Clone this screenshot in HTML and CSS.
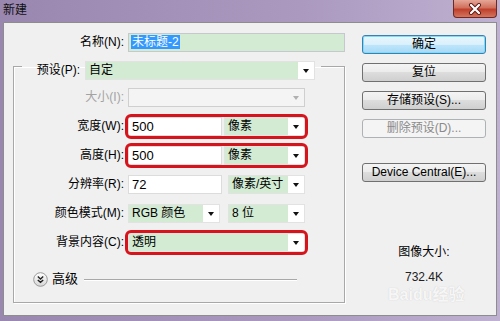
FILE: index.html
```html
<!DOCTYPE html>
<html lang="zh-CN">
<head>
    <meta charset="UTF-8">
    <title>新建</title>
    <link rel="stylesheet" href="styles.css">
</head>
<body>

    <div class="window">
        <div class="titlebar">
            <span class="title">新建</span>
            <span class="close">
                <svg width="14" height="12" viewBox="0 0 14 12">
                    <path d="M3 2 L11 10 M11 2 L3 10" stroke="#5a1a14" stroke-width="4" stroke-linecap="round"/>
                    <path d="M3 2 L11 10 M11 2 L3 10" stroke="#fff" stroke-width="2.2" stroke-linecap="round"/>
                </svg>
            </span>
        </div>

        <div class="client">
            <div class="left">
                <div class="name-row">
                    <span class="lbl">名称(N):</span>
                    <div class="name-field"><span class="selected">未标题-2</span></div>
                </div>

                <fieldset class="group">
                    <legend class="preset">
                        <span class="lbl preset-lbl">预设(P):</span>
                        <div class="combo preset-combo"><span class="val">自定</span><span class="arrow"></span></div>
                    </legend>

                    <div class="rows">
                        <div class="row">
                            <span class="lbl disabled">大小(I):</span>
                            <div class="combo off w-full"><span class="val"></span><span class="arrow"></span></div>
                        </div>
                        <div class="row">
                            <span class="lbl">宽度(W):</span>
                            <div class="pair marked">
                                <div class="input">500</div>
                                <div class="combo unit-near"><span class="val">像素</span><span class="arrow"></span></div>
                            </div>
                        </div>
                        <div class="row">
                            <span class="lbl">高度(H):</span>
                            <div class="pair marked">
                                <div class="input">500</div>
                                <div class="combo unit-near"><span class="val">像素</span><span class="arrow"></span></div>
                            </div>
                        </div>
                        <div class="row">
                            <span class="lbl">分辨率(R):</span>
                            <div class="pair wide">
                                <div class="input">72</div>
                                <div class="combo unit"><span class="val">像素/英寸</span><span class="arrow"></span></div>
                            </div>
                        </div>
                        <div class="row">
                            <span class="lbl">颜色模式(M):</span>
                            <div class="pair wide">
                                <div class="combo mode"><span class="val">RGB 颜色</span><span class="arrow"></span></div>
                                <div class="combo unit"><span class="val">8 位</span><span class="arrow"></span></div>
                            </div>
                        </div>
                        <div class="row">
                            <span class="lbl">背景内容(C):</span>
                            <div class="combo w-full marked"><span class="val">透明</span><span class="arrow"></span></div>
                        </div>
                    </div>

                    <div class="advanced">
                        <svg class="chev" width="15" height="15" viewBox="0 0 15 15">
                            <defs>
                                <linearGradient id="cg" x1="0" y1="0" x2="0" y2="1">
                                    <stop offset="0" stop-color="#ffffff"/>
                                    <stop offset="1" stop-color="#d6d6d6"/>
                                </linearGradient>
                            </defs>
                            <circle cx="7.5" cy="7.5" r="6.8" fill="url(#cg)" stroke="#9a9a9a"/>
                            <path d="M4.8 4.6 L7.5 7 L10.2 4.6 M4.8 7.9 L7.5 10.3 L10.2 7.9" fill="none" stroke="#222" stroke-width="1.4"/>
                        </svg>
                        <span class="adv-lbl">高级</span>
                        <span class="adv-line"></span>
                    </div>
                </fieldset>
            </div>

            <div class="right">
                <div class="btn default">确定</div>
                <div class="btn">复位</div>
                <div class="btn">存储预设(S)...</div>
                <div class="btn off">删除预设(D)...</div>
                <div class="btn device">Device Central(E)...</div>

                <div class="info">
                    <div class="info-lbl">图像大小:</div>
                    <div class="info-val">732.4K</div>
                    <div class="watermark">Baidu经验</div>
                </div>
            </div>
        </div>
    </div>

</body>
</html>
```

FILE: styles.css
```css
/* Ventana general */
body {
    margin: 0;
    font-family: "Liberation Sans", "Noto Sans CJK SC", sans-serif;
    font-size: 12px;
    color: #000;
}

.window {
    width: 500px;
    height: 321px;
    overflow: hidden;
    background: linear-gradient(to right, #9a87b0, #ab99c0 60%, #bfb1d1);
    display: flex;
    flex-direction: column;
}

.titlebar {
    height: 22px;
    display: flex;
    justify-content: space-between;
    align-items: flex-start;
    padding-left: 3px;
}

.title {
    font-size: 12px;
    line-height: 20px;
    color: #111;
}

.close {
    width: 44px;
    height: 18px;
    margin-right: 3px;
    box-sizing: border-box;
    border: 1px solid #6e2a22;
    border-top: none;
    border-radius: 0 0 4px 4px;
    background: linear-gradient(#e6a697, #d0705d 45%, #c0402c 55%, #d3745f);
    display: flex;
    align-items: center;
    justify-content: center;
}

.client {
    height: 294px;
    margin: 0 3px;
    box-sizing: border-box;
    border: 1px solid #8d8d8d;
    background: #f0f0f0;
    display: flex;
}

/* Columna izquierda */
.left {
    width: 341px;
    padding-top: 10px;
}

.lbl {
    flex: none;
    text-align: right;
    white-space: nowrap;
    line-height: 19px;
}

.lbl.disabled {
    color: #a3a3a3;
}

.name-row {
    display: flex;
    gap: 4px;
}

.name-row .lbl {
    width: 120px;
}

.name-field {
    width: 217px;
    height: 19px;
    box-sizing: border-box;
    border: 1px solid #c5c8cc;
    background: #d3ebd3;
    padding: 1px 0 0 2px;
    font-size: 12px;
    line-height: 15px;
}

.selected {
    background: #3399ff;
    color: #fff;
    padding: 0 1px;
}

.group {
    width: 332px;
    box-sizing: border-box;
    margin: 1px 0 0 9px;
    padding: 8px 0 15px 0;
    border: 1px solid #a8a8a8;
    box-shadow: inset 1px 1px 0 #fff, 1px 1px 0 #fff;
}

.preset {
    margin-left: 8px;
    padding: 8px 6px 0 0;
    display: flex;
    gap: 5px;
}

.preset-lbl {
    width: 58px;
}

.combo {
    height: 19px;
    box-sizing: border-box;
    border: 1px solid #e2e2e2;
    background: #d3ebd3;
    display: flex;
}

.combo .val {
    flex: 1;
    padding-left: 3px;
    line-height: 17px;
    white-space: nowrap;
    overflow: hidden;
}

.combo .arrow {
    width: 16px;
    background: #fff;
    display: flex;
    align-items: center;
    justify-content: center;
}

.combo .arrow::after {
    content: "";
    border-left: 3.5px solid transparent;
    border-right: 3.5px solid transparent;
    border-top: 4px solid #111;
}

.combo.off {
    background: #f4f4f4;
    border-color: #cfcfcf;
}

.combo.off .arrow {
    background: #f4f4f4;
}

.combo.off .arrow::after {
    border-top-color: #b0b0b0;
}

.preset-combo {
    width: 230px;
}

.rows {
    display: flex;
    flex-direction: column;
    gap: 10px;
}

.row {
    display: flex;
    gap: 4px;
}

.row .lbl {
    width: 110px;
}

.w-full {
    width: 177px;
}

.pair {
    width: 177px;
    display: flex;
    gap: 2px;
}

.pair.wide {
    gap: 6px;
}

.input {
    width: 94px;
    height: 19px;
    box-sizing: border-box;
    border: 1px solid #dcdcdc;
    background: #fff;
    padding-left: 3px;
    line-height: 17px;
    font-size: 13px;
    flex: none;
}

.unit-near {
    flex: 1;
}

.unit {
    flex: 1;
}

.mode {
    width: 92px;
    flex: none;
    margin-right: 2px;
}

.marked {
    outline: 3px solid #d7131b;
    outline-offset: 0;
    border-radius: 3px;
}

.advanced {
    margin: 19px 47px 0 19px;
    height: 16px;
    display: flex;
    align-items: center;
}

.chev {
    flex: none;
}

.adv-lbl {
    margin-left: 4px;
    font-size: 13px;
    line-height: 16px;
}

.adv-line {
    flex: 1;
    margin-left: 6px;
    height: 1px;
    background: #a8a8a8;
    box-shadow: 0 1px 0 #fff;
}

/* Columna derecha */
.right {
    width: 124px;
    margin-left: 17px;
    padding-top: 12px;
    display: flex;
    flex-direction: column;
    gap: 9px;
}

.btn {
    height: 19px;
    box-sizing: border-box;
    border: 1px solid #707070;
    border-radius: 3px;
    background: linear-gradient(#f4f4f4, #ebebeb 50%, #dddddd 50%, #cfcfcf);
    text-align: center;
    line-height: 17px;
    white-space: nowrap;
}

.btn.default {
    border-color: #3c7fb1;
    box-shadow: inset 0 0 0 1px #7fdcf8;
    background: linear-gradient(#eaf6fd, #d9f0fc 50%, #bee6fd 50%, #a7d9f5);
}

.btn.off {
    border-color: #adb2b5;
    background: #f4f4f4;
    color: #8a8a8a;
}

.btn.device {
    margin-top: 16px;
}

.info {
    position: relative;
    margin-top: 53px;
    text-align: center;
    line-height: 16px;
}

.info-val {
    margin-top: 9px;
    color: #222;
}

.watermark {
    position: absolute;
    left: 26px;
    top: 42px;
    font-size: 16px;
    line-height: 18px;
    font-weight: bold;
    color: rgba(255, 255, 255, 0.85);
    text-shadow: 0 0 1px rgba(120, 120, 120, 0.35);
    white-space: nowrap;
}
```
